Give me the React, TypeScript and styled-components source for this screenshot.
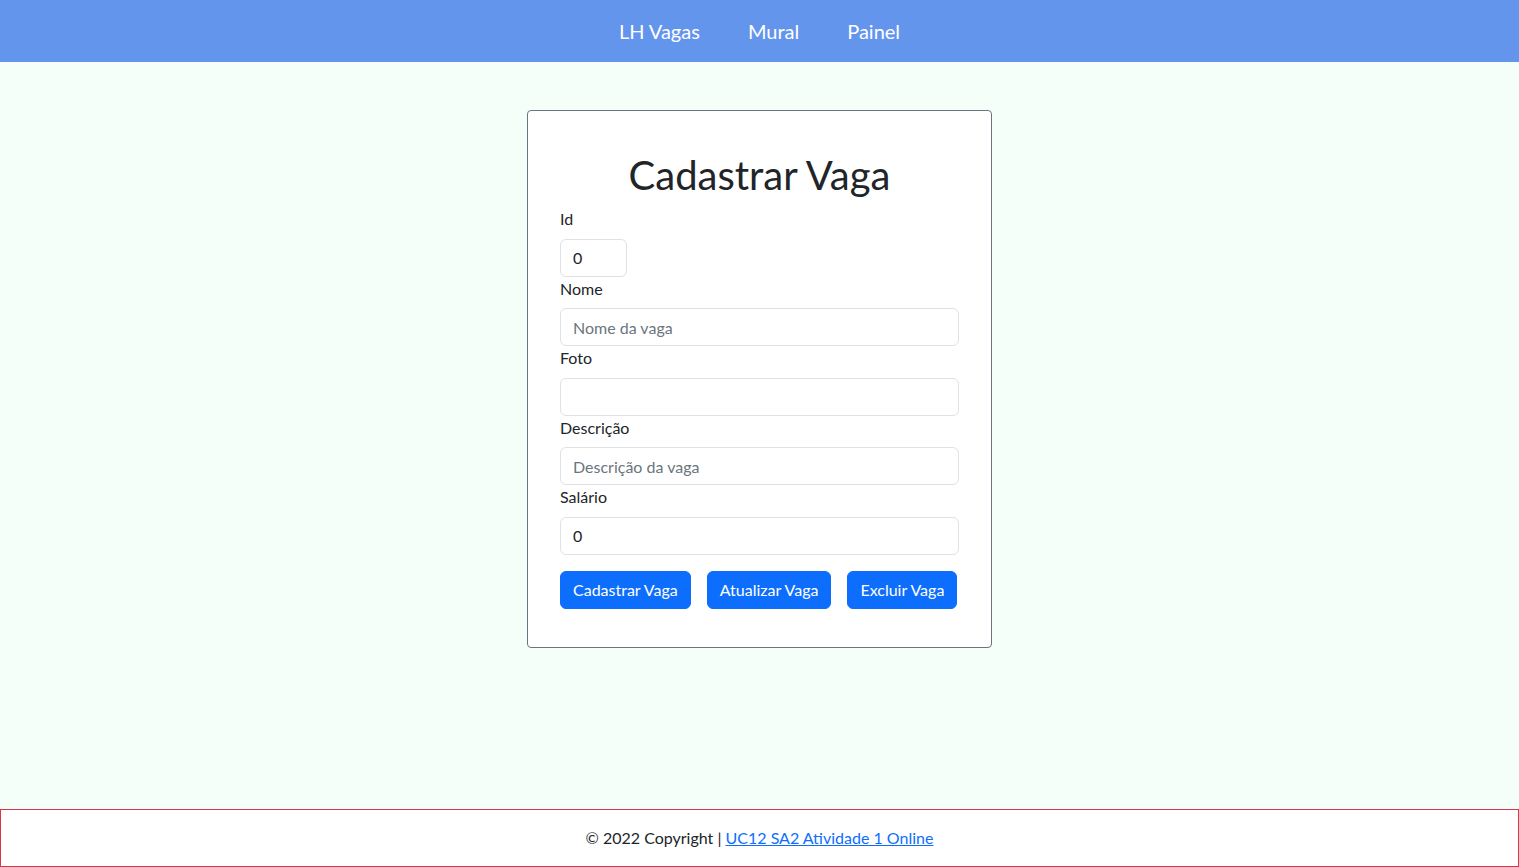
import React from "react";
import styled, { createGlobalStyle } from "styled-components";

const GlobalStyle = createGlobalStyle`
  *, *::before, *::after { box-sizing: border-box; }
  html, body { margin: 0; padding: 0; }
  body {
    font-family: "Lato", "Noto Sans", sans-serif;
    font-size: 16px;
    line-height: 1.5;
    color: #212529;
    background: #f5fffa;
  }
`;

const Page = styled.div`
  min-height: 100vh;
  display: flex;
  flex-direction: column;
`;

const NavBar = styled.nav`
  height: 62px;
  background: #6495ed;
  display: flex;
  justify-content: center;
  align-items: center;
`;

const NavLink = styled.a`
  color: #ffffff;
  font-size: 20px;
  text-decoration: none;
  padding: 0 24px;
  line-height: 30px;
`;

const Main = styled.main`
  flex: 1;
  display: flex;
  justify-content: center;
  align-items: flex-start;
  padding-top: 48px;
`;

const Card = styled.form`
  width: 465px;
  background: #ffffff;
  border: 1px solid #6c757d;
  border-radius: 4px;
  padding: 40px 32px 38px;
  display: flex;
  flex-direction: column;
`;

const Title = styled.h1`
  margin: 0 0 8px;
  font-size: 40px;
  font-weight: 400;
  line-height: 1.2;
  text-align: center;
`;

const Label = styled.label`
  display: block;
  margin-bottom: 7.5px;
  line-height: 24px;
`;

const Input = styled.input<{ $width?: number }>`
  display: block;
  width: ${(p) => (p.$width ? `${p.$width}px` : "100%")};
  height: 38px;
  padding: 6px 12px;
  font-family: inherit;
  font-size: 16px;
  line-height: 24px;
  color: #212529;
  background: #ffffff;
  border: 1px solid #dee2e6;
  border-radius: 6px;
  outline: none;
  &::placeholder { color: #6c757d; }
`;

const ButtonRow = styled.div`
  display: flex;
  gap: 16px;
  margin-top: 16px;
`;

const Button = styled.button`
  height: 38px;
  padding: 6px 12px;
  font-family: inherit;
  font-size: 16px;
  line-height: 24px;
  color: #ffffff;
  background: #0d6efd;
  border: 1px solid #0d6efd;
  border-radius: 6px;
  cursor: pointer;
`;

const Footer = styled.footer`
  height: 58px;
  background: #ffffff;
  border: 1px solid #dc3545;
  display: flex;
  justify-content: center;
  align-items: center;
`;

const FooterLink = styled.a`
  color: #0d6efd;
  text-decoration: underline;
`;

export default function App() {
  return (
    <Page>
      <GlobalStyle />
      <NavBar>
        <NavLink href="#">LH Vagas</NavLink>
        <NavLink href="#">Mural</NavLink>
        <NavLink href="#">Painel</NavLink>
      </NavBar>
      <Main>
        <Card onSubmit={(e) => e.preventDefault()}>
          <Title>Cadastrar Vaga</Title>
          <Label htmlFor="id">Id</Label>
          <Input id="id" $width={67} defaultValue="0" />
          <Label htmlFor="nome">Nome</Label>
          <Input id="nome" placeholder="Nome da vaga" />
          <Label htmlFor="foto">Foto</Label>
          <Input id="foto" />
          <Label htmlFor="descricao">Descrição</Label>
          <Input id="descricao" placeholder="Descrição da vaga" />
          <Label htmlFor="salario">Salário</Label>
          <Input id="salario" defaultValue="0" />
          <ButtonRow>
            <Button type="button">Cadastrar Vaga</Button>
            <Button type="button">Atualizar Vaga</Button>
            <Button type="button">Excluir Vaga</Button>
          </ButtonRow>
        </Card>
      </Main>
      <Footer>
        <span>
          © 2022 Copyright | <FooterLink href="#">UC12 SA2 Atividade 1 Online</FooterLink>
        </span>
      </Footer>
    </Page>
  );
}
